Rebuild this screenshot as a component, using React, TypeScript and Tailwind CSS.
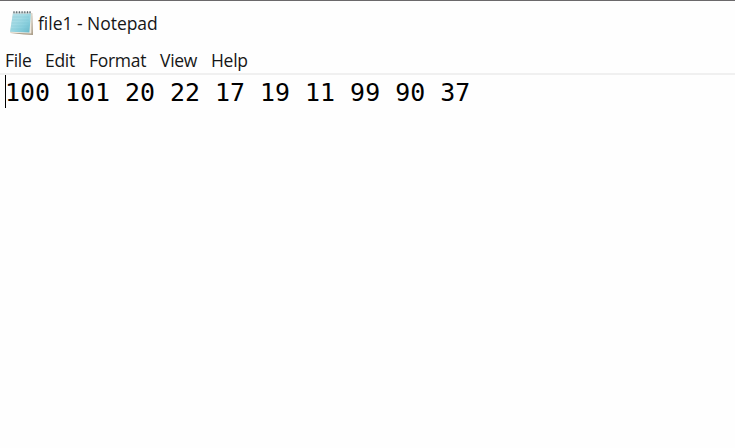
const menus = [
  { label: "File", style: "w-[40px] tracking-[-0.3px]" },
  { label: "Edit", style: "w-[44px] tracking-[-0.3px]" },
  { label: "Format", style: "w-[71px] tracking-[-0.3px]" },
  { label: "View", style: "w-[51px] tracking-[-0.3px]" },
  { label: "Help", style: "w-[50px] tracking-[-0.3px]" },
];

function NotepadIcon() {
  return (
    <svg className="h-[26px] w-[26px] shrink-0" viewBox="0 0 26 26">
      <defs>
        <linearGradient id="page" x1="0" y1="0" x2="1" y2="1">
          <stop offset="0" stopColor="#b5dde7" />
          <stop offset="0.4" stopColor="#a4dbe5" />
          <stop offset="0.65" stopColor="#8bd0de" />
          <stop offset="1" stopColor="#64b6c9" />
        </linearGradient>
      </defs>
      <path d="M6 3.2 24.2 3 25 25 16 24.6 2.5 23Z" fill="#a99c87" />
      <path d="M5 3 23.8 3 23.4 23.6 2 22.8Z" fill="#eee9df" />
      <path d="M5 2.5H23L21.4 22.4 2 21.8Z" fill="url(#page)" />
      <path d="M4.5 7H21M4 10H20.8M3.6 13H20.5M3.2 16H20.2M2.8 19H20" stroke="#79c2d2" strokeWidth=".6" opacity=".6" />
      <path d="M5 2.7H23" stroke="#d1d8d9" strokeWidth="2" />
      <path d="M6 1.3v2M8.7 1.3v2M11.4 1.3v2M14.1 1.3v2M16.8 1.3v2M19.5 1.3v2M22 1.3v2" stroke="#59666b" strokeWidth="1.1" />
    </svg>
  );
}

export default function App() {
  return (
    <main className="flex h-[448px] w-[735px] flex-col overflow-hidden border-t border-[#6b696b] bg-[#fefefe] font-['Open_Sans',sans-serif] text-[17.5px] text-[#161616]">
      <header className="flex h-[43px] shrink-0 items-center pl-[8px]">
        <NotepadIcon />
        <h1 className="ml-[4px] whitespace-nowrap leading-[24px] tracking-[-0.03px]">file1 - Notepad</h1>
      </header>
      <nav className="flex h-[29px] shrink-0 items-center pl-[5px] pt-[2px] leading-[24px]">
        {menus.map((menu) => (
          <span key={menu.label} className={`shrink-0 whitespace-nowrap ${menu.style}`}>
            {menu.label}
          </span>
        ))}
      </nav>
      <section className="flex flex-1 items-start border-t-2 border-[#f0f0f0] bg-[#fefefe]">
        <div className="ml-[5px] flex h-[33px] items-center border-l border-black">
          <p className="-ml-px whitespace-pre pt-[2px] font-['DejaVu_Sans_Mono',monospace] text-[24.9px] leading-[33px] tracking-[0.02px] text-black">100 101 20 22 17 19 11 99 90 37</p>
        </div>
      </section>
    </main>
  );
}
